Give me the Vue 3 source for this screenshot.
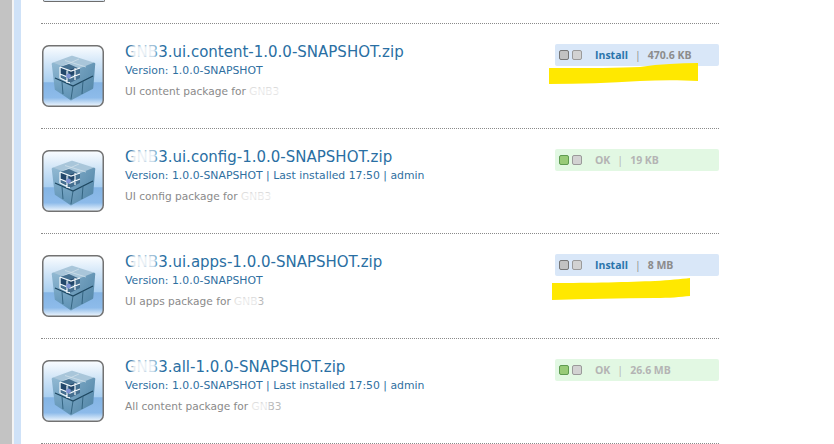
<script setup>
const rows = [
  { title: 'GNB3.ui.content-1.0.0-SNAPSHOT.zip', meta: 'Version: 1.0.0-SNAPSHOT', desc: 'UI content package for ', name: 'GNB3', ok: false, size: '470.6 KB', smudge: 32 },
  { title: 'GNB3.ui.config-1.0.0-SNAPSHOT.zip', meta: 'Version: 1.0.0-SNAPSHOT | Last installed 17:50 | admin', desc: 'UI config package for ', name: 'GNB3', ok: true, size: '19 KB', smudge: 34 },
  { title: 'GNB3.ui.apps-1.0.0-SNAPSHOT.zip', meta: 'Version: 1.0.0-SNAPSHOT', desc: 'UI apps package for ', name: 'GNB3', ok: false, size: '8 MB', smudge: 24 },
  { title: 'GNB3.all-1.0.0-SNAPSHOT.zip', meta: 'Version: 1.0.0-SNAPSHOT | Last installed 17:50 | admin', desc: 'All content package for ', name: 'GNB3', ok: true, size: '26.6 MB', smudge: 18 },
]
</script>

<template>
  <div class="page">
    <div class="rail"></div>
    <div class="inner">
      <div class="stub"><div class="stubIcon"></div></div>
      <div v-for="(r, i) in rows" :key="r.title" class="row">
        <svg class="icon" viewBox="0 0 62 62" aria-hidden="true">
          <defs>
            <linearGradient :id="'bg' + i" x1="0" y1="0" x2="0" y2="1">
              <stop offset="0" stop-color="#fbfdff" />
              <stop offset="0.3" stop-color="#cfe4f7" />
              <stop offset="0.6" stop-color="#a9cff0" />
              <stop offset="0.61" stop-color="#84b4e4" />
              <stop offset="0.86" stop-color="#8dbbea" />
              <stop offset="1" stop-color="#f0f7fd" />
            </linearGradient>
            <linearGradient :id="'left' + i" x1="0" y1="0" x2="0" y2="1">
              <stop offset="0" stop-color="#8fb7d1" />
              <stop offset="1" stop-color="#5f93b6" />
            </linearGradient>
            <linearGradient :id="'right' + i" x1="0" y1="0" x2="1" y2="1">
              <stop offset="0" stop-color="#7ea9c6" />
              <stop offset="1" stop-color="#4f84a6" />
            </linearGradient>
          </defs>
          <rect x="0.75" y="0.75" width="60.5" height="60.5" rx="6" :fill="`url(#bg${i})`" stroke="#727272" stroke-width="1.5" />
          <g stroke-linejoin="round" stroke-width="2.5">
            <path d="M11 19 L30 12 L52 19 L32 27 Z" fill="#a9c6da" stroke="#a9c6da" />
            <path d="M11 19 L32 27 L29 54 L14 44 Z" :fill="`url(#left${i})`" :stroke="`url(#left${i})`" />
            <path d="M32 27 L52 19 L50 43 L29 54 Z" :fill="`url(#right${i})`" :stroke="`url(#right${i})`" />
          </g>
          <path d="M13 33 L31 41 L51 31" stroke="#1d465f" stroke-width="1.2" fill="none" />
          <path d="M20 37 L21 49 M31 41 L29 54 M41 36 L40 49" stroke="#2f5f7c" stroke-width="0.9" fill="none" />
          <path d="M23 15.5 L44 22 M37 14 L21 21" stroke="#cfe0ea" stroke-width="0.8" fill="none" />
          <path d="M18 22 L27 19 L38 24 L38 33 L28 38 L18 33 Z" fill="#456f90" />
          <path d="M19 23 L25 25 L25 31 L19 29 Z M27 25 L33 23 L33 29 L27 31 Z" fill="#23466a" />
          <path d="M18 22 L29 26 L38 23 M18 29 L28 33 L38 29 M25 24 L25 38 M33 23 L33 35 M18 22 L18 33 L28 38" stroke="#f3f8fc" stroke-width="1.2" fill="none" />
          <circle cx="26.5" cy="31" r="2.4" fill="#7f92d4" />
        </svg>

        <div class="info">
          <div class="title">
            <span>{{ r.title }}</span>
            <i class="smudge titleSmudge"></i>
          </div>
          <div class="meta">{{ r.meta }}</div>
          <div class="desc">
            {{ r.desc }}<span class="nameWrap">{{ r.name }}<i class="smudge" :style="{ width: r.smudge + 'px' }"></i></span>
          </div>
        </div>

        <div class="status" :class="{ ok: r.ok }">
          <span class="led" :class="{ green: r.ok }"></span>
          <span class="led second"></span>
          <span class="action">{{ r.ok ? 'OK' : 'Install' }}</span>
          <span class="sep">|</span>
          <span class="size">{{ r.size }}</span>
        </div>
      </div>
    </div>
    <svg class="marker" width="834" height="444" viewBox="0 0 834 444" aria-hidden="true">
      <path d="M549 68 C590 68 620 68 640 67 C660 64 680 63 698 63 L698 81 C680 80 660 80 640 81 C610 83 580 84 549 84 Z" fill="#ffe800" />
      <path d="M552 283 C590 283 630 282 655 281 C670 280 680 279 690 278 L690 296 C680 297 670 298 655 298 C620 298 585 299 552 300 Z" fill="#ffe800" />
    </svg>
  </div>
</template>

<style scoped>
.page {
  position: relative;
  display: flex;
  width: 834px;
  height: 444px;
  overflow: hidden;
  background: #fff;
  font-family: "DejaVu Sans", Verdana, sans-serif;
}
.rail {
  box-sizing: border-box;
  flex: none;
  width: 21px;
  height: 444px;
  border-left: 12px solid #c3c3c3;
  border-right: 7px solid #cfe2f8;
  background: #f4f4f4;
}
.inner {
  flex: none;
  width: 678px;
  margin-left: 20px;
}
.stub {
  box-sizing: border-box;
  height: 24px;
  border-bottom: 1px dotted #8a8a8a;
}
.stubIcon {
  box-sizing: border-box;
  width: 62px;
  height: 2px;
  margin-left: 2px;
  border: 1px solid #6d6d6d;
  border-top: 0;
  border-radius: 0 0 5px 5px;
  background: #dfeaf5;
}
.row {
  box-sizing: border-box;
  display: flex;
  align-items: flex-start;
  height: 105px;
  padding-top: 21px;
  border-bottom: 1px dotted #8a8a8a;
}
.icon {
  flex: none;
  width: 62px;
  height: 62px;
  margin-left: 1px;
}
.info {
  flex: none;
  width: 430px;
  margin-left: 21px;
}
.title {
  position: relative;
  height: 20px;
  margin-top: -3px;
  color: #2a6fa3;
  font-size: 15px;
  line-height: 20px;
  white-space: nowrap;
}
.meta {
  margin-top: 1px;
  color: #2f6f9f;
  font-size: 10.85px;
  line-height: 15px;
  white-space: nowrap;
}
.desc {
  margin-top: 6px;
  color: #8a8a8a;
  font-size: 10.6px;
  line-height: 15px;
  white-space: nowrap;
}
.nameWrap {
  position: relative;
  display: inline-block;
  color: #b9b9b9;
}
.smudge {
  position: absolute;
  left: 0;
  top: 3px;
  height: 9px;
  background: #fff;
  opacity: 0.75;
  filter: blur(1.5px);
}
.titleSmudge {
  left: 7px;
  top: 3px;
  width: 24px;
  height: 13px;
  opacity: 0.9;
}
.status {
  box-sizing: border-box;
  display: flex;
  align-items: center;
  flex: none;
  width: 164px;
  height: 22px;
  margin-top: -1px;
  padding-left: 4px;
  padding-bottom: 1px;
  border-radius: 2px;
  background: #d9e7f8;
  color: #8c8c8c;
  font-family: "Open Sans", "DejaVu Sans", sans-serif;
  font-size: 10.5px;
  font-weight: 700;
}
.status.ok {
  background: #e2f8e3;
  color: #b4b4b4;
}
.led {
  box-sizing: border-box;
  flex: none;
  width: 10px;
  height: 10px;
  border: 1px solid #777;
  border-radius: 2px;
  background: #c2c2c2;
}
.led.second {
  margin-left: 3px;
  border-color: #9a9a9a;
  background: #d2d2d2;
}
.led.green {
  border-color: #5f9b52;
  background: #98cb78;
}
.action {
  margin-left: 13px;
}
.status:not(.ok) .action {
  color: #2a74ab;
}
.sep {
  margin: 0 7px;
  font-weight: 400;
}
.marker {
  position: absolute;
  left: 0;
  top: 0;
  pointer-events: none;
}
</style>
